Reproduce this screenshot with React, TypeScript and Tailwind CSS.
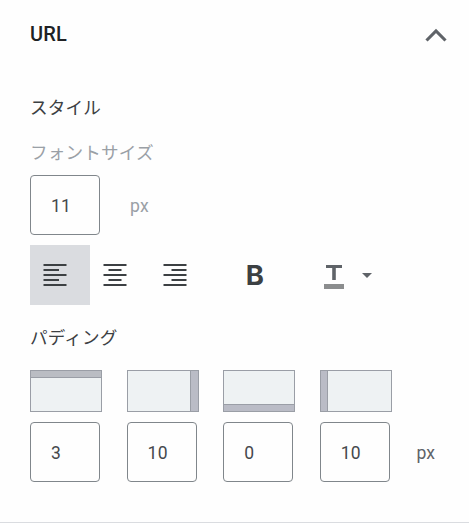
import React from "react";

type Side = "top" | "right" | "bottom" | "left";

const sides: { side: Side; value: string }[] = [
  { side: "top", value: "3" },
  { side: "right", value: "10" },
  { side: "bottom", value: "0" },
  { side: "left", value: "10" },
];

const previewLayout: Record<Side, string> = {
  top: "flex-col",
  bottom: "flex-col-reverse",
  left: "flex-row",
  right: "flex-row-reverse",
};

const previewBand: Record<Side, string> = {
  top: "h-1.5 border-b bg-[#babdc3]",
  bottom: "h-1.5 border-t bg-[#babcc6]",
  left: "w-1.5 border-r bg-[#babcc6]",
  right: "w-[7px] border-l bg-[#babcc6]",
};

function PaddingPreview({ side }: { side: Side }) {
  return (
    <div className={`flex h-[42px] w-[72px] border border-[#9a9ea6] bg-[#eef2f3] ${previewLayout[side]}`}>
      <div className={`box-content shrink-0 border-[#9a9ea6] ${previewBand[side]}`} />
    </div>
  );
}

function NumberBox({ value }: { value: string }) {
  return (
    <div className="flex h-[60px] w-[70px] items-center rounded-[4px] border border-[#80868b] pt-[3px] pl-5 text-[17.5px] tracking-[0.2px] text-[#45484c]">
      {value}
    </div>
  );
}

const alignPaths = {
  left: "M23.5 24h23M23.5 29h15.5M23.5 34h23M23.5 39h15.5M23.5 44h23",
  center: "M23.5 24h23M28.5 29h13M23.5 34h23M28.5 39h13M23.5 44h23",
  right: "M23.5 24h23M31.5 29h15M23.5 34h23M31.5 39h15M23.5 44h23",
};

function AlignButton({ align, active }: { align: keyof typeof alignPaths; active?: boolean }) {
  return (
    <button className={`h-[60px] w-[60px] ${active ? "bg-[#dadce0]" : ""}`} aria-label={align}>
      <svg width="60" height="60" viewBox="10 4 60 60" fill="none" stroke="#3c4043" strokeWidth="2">
        <path d={alignPaths[align]} />
      </svg>
    </button>
  );
}

export default function App() {
  return (
    <div className="h-[523px] w-[469px] border-b border-[#dadce0] bg-[#fefefe] pl-[30px] font-['Roboto','Noto_Sans_CJK_JP',sans-serif] text-[17.6px] tracking-[0.15px] text-[#3c4043]">
      <header className="flex h-[69px] items-center justify-between pr-[22px]">
        <h2 className="pb-0.5 text-[20px] font-medium text-[#202124]">URL</h2>
        <svg width="22" height="14" viewBox="0 0 22 14" fill="none" stroke="#5f6368" strokeWidth="3.1">
          <path d="M1.5 12.5 11 3l9.5 9.5" />
        </svg>
      </header>

      <h3 className="mt-[26px] h-[26px] leading-[26px]">スタイル</h3>
      <div className="mt-[19px] h-[26px] leading-[26px] text-[#9aa0a6]">フォントサイズ</div>

      <div className="mt-[9px] flex items-center gap-[30px]">
        <NumberBox value="11" />
        <span className="pt-0.5 text-[#9aa0a6]">px</span>
      </div>

      <div className="mt-[10px] flex h-[60px] items-center">
        <AlignButton align="left" active />
        <AlignButton align="center" />
        <AlignButton align="right" />
        <button className="ml-[35px] w-[20px] text-center font-['Inter',sans-serif] text-[27.5px] leading-[60px] font-bold">B</button>
        <button className="ml-[59px] flex items-center gap-[18px]" aria-label="color">
          <svg className="mt-1" width="20" height="24" viewBox="0 0 20 24" fill="none">
            <path d="M2 1.5h16" stroke="#5f6368" strokeWidth="3" />
            <path d="M10 1.5V15" stroke="#5f6368" strokeWidth="3.6" />
            <path d="M0 21.5h20" stroke="#8b8d8e" strokeWidth="5" />
          </svg>
          <svg width="10" height="5" viewBox="0 0 10 5" fill="#5f6368">
            <path d="M0 0h10L5 5z" />
          </svg>
        </button>
      </div>

      <h3 className="mt-5 h-[26px] leading-[26px]">パディング</h3>

      <div className="mt-[19px] flex">
        {sides.map(({ side, value }) => (
          <div key={side} className="flex w-[96.6px] flex-col gap-[10px]">
            <PaddingPreview side={side} />
            <NumberBox value={value} />
          </div>
        ))}
        <span className="flex h-[60px] items-center self-end pt-0.5 text-[#5f6368]">px</span>
      </div>
    </div>
  );
}
